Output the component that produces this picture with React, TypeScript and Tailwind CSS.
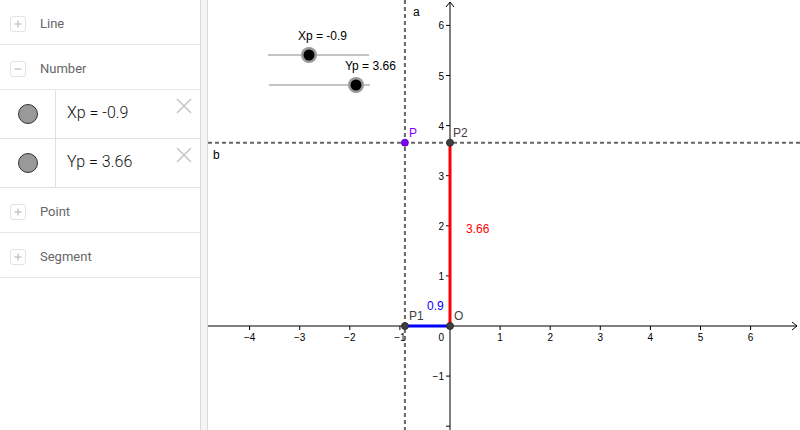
import React from 'react'

// page coordinates: origin of the graph at (450, 326), 50px per unit
const OX = 450
const OY = 326
const U  = 50.1

interface Row {
  name:  string
  value: string
}

const numbers: Row[] = [
  { name: 'Xp', value: '-0.9' },
  { name: 'Yp', value: '3.66' },
]

function Toggle({ open }: { open: boolean }) {
  return (
    <div className="w-[16px] h-[16px] rounded-[3px] border border-[#e3e3e3] flex items-center justify-center">
      <svg width="10" height="10" viewBox="0 0 10 10">
        <line x1="1.5" y1="5" x2="8.5" y2="5" stroke="#bdbdbd" strokeWidth="1.2" />
        {!open && <line x1="5" y1="1.5" x2="5" y2="8.5" stroke="#bdbdbd" strokeWidth="1.2" />}
      </svg>
    </div>
  )
}

function Header({ label, open = false }: { label: string, open?: boolean }) {
  return (
    <div className="h-[45px] flex items-center pl-[10px] pt-[3px] border-b border-[#e6e6e6]">
      <Toggle open={open} />
      <span className="ml-[14px] text-[13px] text-[#666]">{label}</span>
    </div>
  )
}

function NumberRow({ row }: { row: Row }) {
  return (
    <div className="h-[49px] flex border-b border-[#e0e0e0]">
      <div className="w-[56px] flex items-center justify-center border-r border-[#e0e0e0]">
        <div className="w-[20px] h-[20px] rounded-full bg-[#999] border border-[#333]" />
      </div>
      <div className="flex-1 relative flex items-center pl-[11px] pb-[2px] text-[16px] text-[#111] font-light" style={{ fontFamily: 'Roboto, "Liberation Sans", sans-serif' }}>
        <span>{row.name} = {row.value}</span>
        <svg className="absolute right-[8px] top-[8px]" width="16" height="16" viewBox="0 0 16 16">
          <line x1="1" y1="1" x2="15" y2="15" stroke="#c8c8c8" strokeWidth="1.6" />
          <line x1="15" y1="1" x2="1" y2="15" stroke="#c8c8c8" strokeWidth="1.6" />
        </svg>
      </div>
    </div>
  )
}

function Graph() {
  const xs = [-4, -3, -2, -1, 1, 2, 3, 4, 5, 6]
  const ys = [-1, 1, 2, 3, 4, 5, 6]
  const px = (v: number) => OX + v * U
  const py = (v: number) => OY - v * U
  const P  = { x: px(-0.9), y: py(3.66) }
  const lbl = { fontFamily: '"Liberation Sans", Arial, sans-serif' }

  return (
    <svg width="592" height="430" className="block" style={lbl}>
      <g transform="translate(-208,0)">
        {/* sliders */}
        <line x1="268" y1="55" x2="369" y2="55" stroke="#888" strokeWidth="1" />
        <circle cx="309" cy="55" r="8" fill="#999" />
        <circle cx="309" cy="55" r="5.5" fill="#000" />
        <text x="298" y="40" fontSize="12" fill="#000">Xp = -0.9</text>
        <line x1="269" y1="85" x2="370" y2="85" stroke="#888" strokeWidth="1" />
        <circle cx="356" cy="85" r="8" fill="#999" />
        <circle cx="356" cy="85" r="5.5" fill="#000" />
        <text x="345" y="70" fontSize="12" fill="#000">Yp = 3.66</text>

        {/* axes */}
        <line x1="208" y1={OY} x2="797" y2={OY} stroke="#000" strokeWidth="1" />
        <polyline points={`792,${OY - 4} 797,${OY} 792,${OY + 4}`} fill="none" stroke="#000" strokeWidth="1" />
        <line x1={OX} y1="2" x2={OX} y2="430" stroke="#000" strokeWidth="1" />
        <polyline points={`${OX - 4},7 ${OX},2 ${OX + 4},7`} fill="none" stroke="#000" strokeWidth="1" />
        {xs.map(v => (
          <g key={'x' + v}>
            <line x1={px(v)} y1={OY} x2={px(v)} y2={OY + 4} stroke="#000" />
            <text x={px(v)} y={OY + 15} fontSize="10" textAnchor="middle" fill="#000">{v < 0 ? `−${-v}` : v}</text>
          </g>
        ))}
        {ys.map(v => (
          <g key={'y' + v}>
            <line x1={OX - 4} y1={py(v)} x2={OX} y2={py(v)} stroke="#000" />
            <text x={OX - 6} y={py(v) + 4} fontSize="10" textAnchor="end" fill="#000">{v < 0 ? `−${-v}` : v}</text>
          </g>
        ))}
        <line x1={OX - 4} y1={py(-2)} x2={OX} y2={py(-2)} stroke="#000" />
        <text x={OX - 6} y={OY + 15} fontSize="10" textAnchor="end" fill="#000">0</text>

        {/* dashed lines a and b */}
        <line x1={P.x} y1="0" x2={P.x} y2="430" stroke="#666" strokeWidth="2" strokeDasharray="4 3" />
        <line x1="208" y1={P.y} x2="800" y2={P.y} stroke="#666" strokeWidth="2" strokeDasharray="4 3" />
        <text x="413" y="16" fontSize="12" fill="#000">a</text>
        <text x="213" y="159" fontSize="12" fill="#000">b</text>

        {/* segments */}
        <line x1={OX} y1={P.y} x2={OX} y2={OY} stroke="#ff0000" strokeWidth="3" />
        <line x1={P.x} y1={OY} x2={OX} y2={OY} stroke="#0000ff" strokeWidth="3" />
        <text x="466" y="233" fontSize="12" fill="#ff0000">3.66</text>
        <text x="427" y="310" fontSize="12" fill="#0000ff">0.9</text>

        {/* points */}
        <circle cx={P.x} cy={P.y} r="3.5" fill="#7f00ff" stroke="#4d0099" strokeWidth="0.8" />
        <text x="409" y="137" fontSize="12" fill="#7f00ff">P</text>
        <circle cx={OX} cy={P.y} r="3.5" fill="#404040" stroke="#222" strokeWidth="0.8" />
        <text x="453" y="137" fontSize="12" fill="#404040">P2</text>
        <circle cx={P.x} cy={OY} r="3.5" fill="#404040" stroke="#222" strokeWidth="0.8" />
        <text x="409" y="320" fontSize="12" fill="#404040">P1</text>
        <circle cx={OX} cy={OY} r="3.5" fill="#404040" stroke="#222" strokeWidth="0.8" />
        <text x="454" y="320" fontSize="12" fill="#404040">O</text>
      </g>
    </svg>
  )
}

export default function App() {
  return (
    <div className="w-[800px] h-[430px] flex bg-white overflow-hidden" style={{ fontFamily: 'Roboto, "Noto Sans", sans-serif' }}>
      {/* algebra view */}
      <div className="w-[200px] h-full">
        <Header label="Line" />
        <Header label="Number" open />
        {numbers.map(r => <NumberRow key={r.name} row={r} />)}
        <Header label="Point" />
        <Header label="Segment" />
      </div>

      {/* splitter */}
      <div className="w-[8px] h-full bg-[#f4f4f4] border-x border-[#d9d9d9]" />

      {/* graphics view */}
      <Graph />
    </div>
  )
}
